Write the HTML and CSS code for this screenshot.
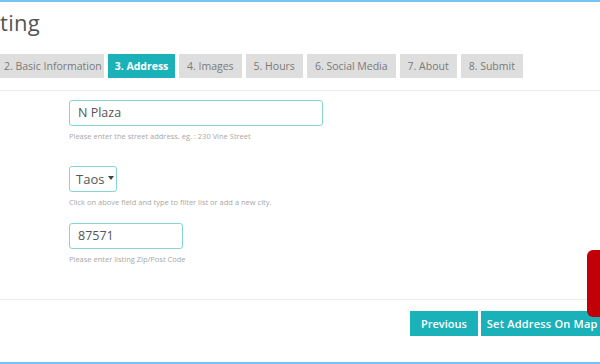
FILE: index.html
```html
<!DOCTYPE html>
<html>
<head>
<meta charset="utf-8">
<link rel="stylesheet" href="styles.css">
</head>
<body>
<div class="page">
  <div class="topbar"></div>
  <h1 class="title">ting</h1>
  <nav class="tabs">
    <span class="tab first">2. Basic Information</span>
    <span class="tab active">3. Address</span>
    <span class="tab">4. Images</span>
    <span class="tab">5. Hours</span>
    <span class="tab">6. Social Media</span>
    <span class="tab">7. About</span>
    <span class="tab">8. Submit</span>
  </nav>
  <div class="form">
    <div class="field">
      <div class="input street">N Plaza</div>
      <p class="help">Please enter the street address. eg. : 230 Vine Street</p>
    </div>
    <div class="field city">
      <div class="input select">Taos <span class="caret"></span></div>
      <p class="help">Click on above field and type to filter list or add a new city.</p>
    </div>
    <div class="field zipfield">
      <div class="input zip">87571</div>
      <p class="help">Please enter listing Zip/Post Code</p>
    </div>
  </div>
  <div class="actions">
    <button class="btn">Previous</button>
    <button class="btn map">Set Address On Map</button>
  </div>
  <div class="alert"></div>
  <div class="bottombar"></div>
</div>
</body>
</html>
```
FILE: styles.css
```css
* { box-sizing: border-box; }
html, body { margin: 0; padding: 0; background: #fff; }
body { font-family: "Open Sans", "Noto Sans", sans-serif; color: #555; }
.page { position: relative; width: 600px; height: 364px; overflow: hidden; display: flex; flex-direction: column; }
.topbar { height: 2px; background: #79c3f2; flex: none; }
.title { margin: 6px 0 0 0; font-weight: 400; font-size: 22px; line-height: 28px; color: #555; letter-spacing: 0.3px; }
.tabs { display: flex; gap: 4px; margin-top: 18px; padding-bottom: 12px; border-bottom: 1px solid #ececec; }
.tab { height: 24px; line-height: 24px; padding: 0 8px; background: #dedede; color: #7a7a7a; font-size: 10.5px; white-space: nowrap; }
.tab.first { padding-left: 4px; width: 104px; }
.tab.active { background: #1bb1b8; color: #fff; font-weight: 700; width: 67px; padding: 0; text-align: center; }
.form { padding: 9px 0 0 69px; display: flex; flex-direction: column; height: 209px; border-bottom: 1px solid #ececec; flex: none; }
.field { display: flex; flex-direction: column; }
.input { height: 26px; border: 1.5px solid #84d6d6; border-radius: 3px; font-size: 12.5px; line-height: 23px; padding-left: 8px; color: #555; }
.street { width: 254px; }
.select { width: 48px; padding-left: 6px; display: flex; align-items: center; gap: 4px; font-size: 13px; }
.caret { width: 0; height: 0; border-left: 3px solid transparent; border-right: 3px solid transparent; border-top: 4px solid #444; margin-top: -3px; }
.zip { width: 114px; }
.help { margin: 5px 0 0 0; font-size: 7.5px; color: #a8a8a8; line-height: 10px; }
.city { margin-top: 25px; }
.zipfield { margin-top: 16px; }
.actions { display: flex; justify-content: flex-start; gap: 3px; padding: 11px 0 0 410px; }
.btn { height: 25px; border: 0; background: #1bb1b8; color: #fff; font-family: inherit; font-size: 11px; font-weight: 600; padding: 0 11px; white-space: nowrap; flex: none; }
.btn.map { padding: 0 6px; letter-spacing: 0.2px; }
.alert { position: absolute; left: 587px; top: 250px; width: 20px; height: 67px; background: #c10008; border-radius: 6px 0 0 6px; }
.bottombar { position: absolute; left: 0; right: 0; bottom: 0; height: 2px; background: #79c3f2; }
```
